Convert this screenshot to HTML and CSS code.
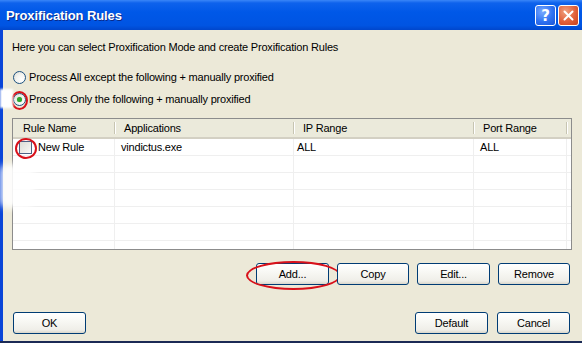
FILE: index.html
```html
<!DOCTYPE html>
<html>
<head>
<meta charset="utf-8">
<link rel="stylesheet" href="styles.css">
</head>
<body>
<div class="window">
  <div class="titlebar">
    <span class="title">Proxification Rules</span>
    <div class="caption-btns">
      <span class="cbtn help">?</span>
      <span class="cbtn close"><svg width="11" height="11" viewBox="0 0 11 11"><path d="M1.5 1.5 L9.5 9.5 M9.5 1.5 L1.5 9.5" stroke="#fff" stroke-width="2" stroke-linecap="round"/></svg></span>
    </div>
  </div>
  <div class="client">
    <p class="intro">Here you can select Proxification Mode and create Proxification Rules</p>
    <div class="modes">
      <div class="radio-row"><span class="radio"></span><span>Process All except the following + manually proxified</span></div>
      <div class="radio-row"><span class="radio checked"><span class="dot"></span><span class="ring ring-radio"></span></span><span>Process Only the following + manually proxified</span></div>
    </div>
    <div class="list">
      <div class="lrow head">
        <span class="hcell">Rule Name</span>
        <span class="hcell">Applications</span>
        <span class="hcell">IP Range</span>
        <span class="hcell">Port Range</span>
        <span class="hcell last"></span>
      </div>
      <div class="lrow">
        <span class="cell first"><span class="check"><span class="ring ring-check"></span></span>New Rule</span>
        <span class="cell">vindictus.exe</span>
        <span class="cell ip">ALL</span>
        <span class="cell">ALL</span>
        <span class="cell last"></span>
      </div>
      <div class="lrow"><span class="cell"></span><span class="cell"></span><span class="cell"></span><span class="cell"></span><span class="cell last"></span></div>
      <div class="lrow"><span class="cell"></span><span class="cell"></span><span class="cell"></span><span class="cell"></span><span class="cell last"></span></div>
      <div class="lrow"><span class="cell"></span><span class="cell"></span><span class="cell"></span><span class="cell"></span><span class="cell last"></span></div>
      <div class="lrow"><span class="cell"></span><span class="cell"></span><span class="cell"></span><span class="cell"></span><span class="cell last"></span></div>
      <div class="lrow"><span class="cell"></span><span class="cell"></span><span class="cell"></span><span class="cell"></span><span class="cell last"></span></div>
      <div class="lrow"><span class="cell"></span><span class="cell"></span><span class="cell"></span><span class="cell"></span><span class="cell last"></span></div>
    </div>
    <div class="actions">
      <button class="btn w73 add">Add...<span class="ring ring-add"></span></button>
      <button class="btn w72">Copy</button>
      <button class="btn w73">Edit...</button>
      <button class="btn w72">Remove</button>
    </div>
    <div class="footer">
      <button class="btn w73">OK</button>
      <div class="footer-right">
        <button class="btn w73">Default</button>
        <button class="btn w73">Cancel</button>
      </div>
    </div>
  </div>
  <div class="blot blot-a"></div>
  <div class="blot blot-b"></div>
</div>
</body>
</html>
```

FILE: styles.css
```css
* { box-sizing: border-box; }
html, body {
  margin: 0;
  padding: 0;
  width: 582px;
  height: 343px;
  overflow: hidden;
  background: #ece9d8;
}
.window {
  position: relative;
  width: 582px;
  height: 343px;
  display: flex;
  flex-direction: column;
  font-family: "Liberation Sans", Arial, sans-serif;
  font-size: 11px;
  letter-spacing: -0.2px;
  color: #000;
  border-bottom: 2px solid #1b2a55;
}
.titlebar {
  height: 30px;
  flex: none;
  display: flex;
  align-items: center;
  justify-content: space-between;
  padding: 0 3px 0 6px;
  background: linear-gradient(#3a86f8 0%, #0e62ec 10%, #0058e8 40%, #0054e2 85%, #0046cc 100%);
}
.title {
  color: #fff;
  font-family: "Liberation Sans", Arial, sans-serif;
  font-weight: bold;
  font-size: 13px;
  letter-spacing: -0.1px;
  text-shadow: 1px 1px 0 #0a2a8a;
  margin-top: 1px;
}
.caption-btns {
  display: flex;
  gap: 2px;
  margin-top: 1px;
}
.cbtn {
  width: 21px;
  height: 21px;
  border: 1px solid #fff;
  border-radius: 3px;
  display: flex;
  align-items: center;
  justify-content: center;
  color: #fff;
}
.help {
  background: radial-gradient(circle at 35% 30%, #7aaaff 0%, #2f72f2 55%, #1b55d6 100%);
  font-family: "DejaVu Sans", sans-serif;
  font-weight: bold;
  font-size: 15px;
  letter-spacing: 0;
}
.close {
  background: radial-gradient(circle at 35% 30%, #f0a080 0%, #e0603a 55%, #c9411d 100%);
}
.client {
  flex: 1;
  display: flex;
  flex-direction: column;
  padding: 10px 10px 0 9px;
  border-left: 3px solid #0a45d8;
}
.intro {
  margin: 0;
  line-height: 14px;
}
.modes {
  margin-top: 12px;
  display: flex;
  flex-direction: column;
}
.radio-row {
  height: 22px;
  display: flex;
  align-items: center;
  gap: 3px;
}
.radio {
  position: relative;
  width: 13px;
  height: 13px;
  border-radius: 50%;
  border: 1px solid #1c5180;
  background: radial-gradient(circle at 70% 70%, #fff 0%, #f3f3ef 50%, #d8d8d0 100%);
  flex: none;
  display: flex;
  align-items: center;
  justify-content: center;
  margin-left: 1px;
}
.dot {
  width: 5px;
  height: 5px;
  border-radius: 50%;
  background: #2fa52f;
  box-shadow: 0 0 1px #6c6;
}
.ring {
  position: absolute;
  border: 2px solid #d8111a;
  border-radius: 50%;
  pointer-events: none;
}
.ring-radio {
  left: -3px;
  top: -3px;
  width: 17px;
  height: 19px;
}
.list {
  margin-top: 8px;
  height: 132px;
  border: 1px solid #8c8c8c;
  background: #fff;
  overflow: hidden;
  flex: none;
}
.lrow {
  display: grid;
  grid-template-columns: 102px 179px 180px 93px 1fr;
  height: 17px;
}
.lrow.head {
  height: 20px;
  background: #ebeadb;
  border-bottom: 2px solid #d3d0c3;
}
.hcell {
  display: flex;
  align-items: center;
  padding-left: 9px;
  position: relative;
}
.hcell::after {
  content: "";
  position: absolute;
  right: 0;
  top: 3px;
  bottom: 3px;
  width: 1px;
  background: #c7c5b2;
  box-shadow: 1px 0 0 #fff;
}
.hcell:first-child { padding-left: 10px; }
.hcell.last::after { display: none; }
.cell {
  display: flex;
  align-items: center;
  padding-left: 6px;
  border-right: 1px solid #efefef;
  border-bottom: 1px solid #efefef;
}
.cell.ip { padding-left: 3px; }
.cell.last { border-right: none; }
.cell.first { padding-left: 6px; gap: 6px; }
.check {
  position: relative;
  width: 13px;
  height: 13px;
  border: 1px solid #4d6185;
  background: linear-gradient(135deg, #dcdcd6 0%, #eeeee9 60%, #fafafa 100%);
  flex: none;
}
.ring-check {
  left: -5px;
  top: -4px;
  width: 22px;
  height: 21px;
}
.actions {
  margin-top: 13px;
  display: flex;
  justify-content: flex-end;
  gap: 8px;
  padding-right: 2px;
}
.btn {
  height: 22px;
  border: 1px solid #003c74;
  border-radius: 3px;
  background: linear-gradient(#ffffff 0%, #f8f8f4 40%, #efeee8 85%, #d9d6cb 100%);
  font-family: "Liberation Sans", Arial, sans-serif;
  font-size: 11px;
  letter-spacing: -0.2px;
  color: #000;
  padding: 0;
  position: relative;
}
.w72 { width: 72px; }
.w73 { width: 73px; }
.ring-add {
  left: -11px;
  top: -3px;
  width: 95px;
  height: 29px;
}
.footer {
  margin-top: 27px;
  display: flex;
  justify-content: space-between;
  padding-right: 2px;
  padding-left: 1px;
}
.footer-right {
  display: flex;
  gap: 9px;
}
.blot {
  position: absolute;
  background: #fff;
  pointer-events: none;
}
.blot-a {
  left: 0;
  top: 89px;
  width: 13px;
  height: 19px;
  filter: blur(1px);
}
.blot-b {
  left: 0;
  top: 164px;
  width: 34px;
  height: 44px;
  border-radius: 8px;
  filter: blur(3px);
  opacity: 0.9;
}
```
